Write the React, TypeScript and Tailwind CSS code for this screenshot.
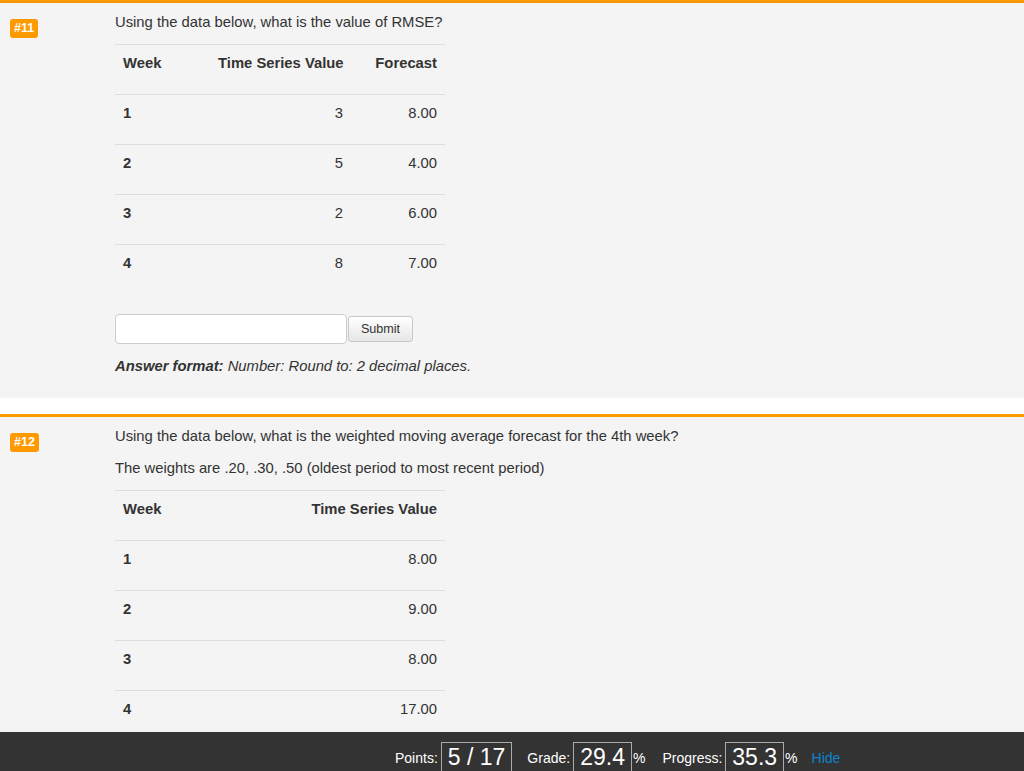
import React from 'react';

const font = { fontFamily: '"Liberation Sans", Arial, Helvetica, sans-serif' };

type Row = { week: string; value: string; forecast?: string };

const q11Rows: Row[] = [
  { week: '1', value: '3', forecast: '8.00' },
  { week: '2', value: '5', forecast: '4.00' },
  { week: '3', value: '2', forecast: '6.00' },
  { week: '4', value: '8', forecast: '7.00' },
];

const q12Rows: Row[] = [
  { week: '1', value: '8.00' },
  { week: '2', value: '9.00' },
  { week: '3', value: '8.00' },
  { week: '4', value: '17.00' },
];

function Badge({ n }: { n: number }) {
  return (
    <div className="w-[115px] shrink-0 pl-[10px] pt-[3px]">
      <span className="inline-block h-[19px] rounded-[3px] bg-[#f90] px-[4px] text-[12.5px] font-bold leading-[19px] text-white">
        #{n}
      </span>
    </div>
  );
}

function Question({ n, children }: { n: number; children: React.ReactNode }) {
  return (
    <section className="flex border-t-[3px] border-[#f90] bg-[#f4f4f4] pt-[9px] pb-[22px]">
      <Badge n={n} />
      <div className="flex-1 text-[14.8px] leading-[20px] text-[#333]">{children}</div>
    </section>
  );
}

function ThreeColTable({ rows }: { rows: Row[] }) {
  return (
    <div className="w-[330px] whitespace-nowrap">
      <div className="grid h-[50px] grid-cols-[95px_141px_94px] border-t border-[#ddd] pt-[8px] font-bold">
        <div className="px-2">Week</div>
        <div className="px-2 text-right">Time Series Value</div>
        <div className="px-2 text-right">Forecast</div>
      </div>
      {rows.map((r) => (
        <div key={r.week} className="grid h-[50px] grid-cols-[95px_141px_94px] border-t border-[#ddd] pt-[8px]">
          <div className="px-2 font-bold">{r.week}</div>
          <div className="px-2 text-right">{r.value}</div>
          <div className="px-2 text-right">{r.forecast}</div>
        </div>
      ))}
    </div>
  );
}

function TwoColTable({ rows }: { rows: Row[] }) {
  return (
    <div className="w-[330px] whitespace-nowrap">
      <div className="flex h-[50px] justify-between border-t border-[#ddd] pt-[8px] font-bold">
        <div className="px-2">Week</div>
        <div className="px-2 text-right">Time Series Value</div>
      </div>
      {rows.map((r) => (
        <div key={r.week} className="flex h-[50px] justify-between border-t border-[#ddd] pt-[8px]">
          <div className="px-2 font-bold">{r.week}</div>
          <div className="px-2 text-right">{r.value}</div>
        </div>
      ))}
    </div>
  );
}

function AnswerForm() {
  return (
    <>
      <div className="mt-5 flex items-center">
        <input
          type="text"
          className="h-[30px] w-[232px] rounded-[4px] border border-[#ccc] bg-white px-2 outline-none"
        />
        <button className="ml-[1px] h-[26px] w-[65px] rounded-[3px] border border-[#c8c8c8] bg-gradient-to-b from-white to-[#e6e6e6] text-[12.6px] text-[#333]">
          Submit
        </button>
      </div>
      <p className="mt-3 italic">
        <b>Answer format:</b> Number: Round to: 2 decimal places.
      </p>
    </>
  );
}

function StatBox({ children }: { children: React.ReactNode }) {
  return (
    <span className="ml-[3px] h-[29px] border border-b-0 border-[#aaa] px-[6px] text-[23px] leading-[29px] text-white">
      {children}
    </span>
  );
}

export default function App() {
  return (
    <div className="min-h-screen bg-white pb-[60px]" style={font}>
      <Question n={11}>
        <p className="mb-3">Using the data below, what is the value of RMSE?</p>
        <ThreeColTable rows={q11Rows} />
        <AnswerForm />
      </Question>

      <div className="h-4 bg-white" />

      <Question n={12}>
        <p className="mb-3">Using the data below, what is the weighted moving average forecast for the 4th week?</p>
        <p className="mb-3">The weights are .20, .30, .50 (oldest period to most recent period)</p>
        <TwoColTable rows={q12Rows} />
        <AnswerForm />
      </Question>

      <footer className="fixed bottom-0 left-0 right-0 flex h-[39px] items-start bg-[#333] pt-[10px] pl-[395px] text-[14px] text-white">
        <span className="pt-[2px] leading-[29px]">Points:</span>
        <StatBox>5 / 17</StatBox>
        <span className="ml-[15px] pt-[2px] leading-[29px]">Grade:</span>
        <StatBox>29.4</StatBox>
        <span className="ml-[1px] pt-[2px] leading-[29px]">%</span>
        <span className="ml-[17px] pt-[2px] leading-[29px]">Progress:</span>
        <StatBox>35.3</StatBox>
        <span className="ml-[1px] pt-[2px] leading-[29px]">%</span>
        <a className="ml-[14px] cursor-pointer pt-[2px] leading-[29px] text-[#0e83cd]">Hide</a>
      </footer>
    </div>
  );
}
